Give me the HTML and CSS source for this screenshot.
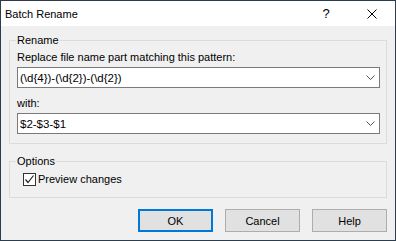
FILE: index.html
```html
<!DOCTYPE html>
<html lang="en">
<head>
    <meta charset="UTF-8">
    <title>Batch Rename</title>
    <link rel="stylesheet" href="styles.css">
</head>
<body>
    <div class="window">
        <!-- Заголовок окна -->
        <div class="titlebar">
            <div class="title">Batch Rename</div>
            <div class="caption-btn help-btn">?</div>
            <div class="caption-btn close-btn">
                <svg width="10" height="10" viewBox="0 0 10 10">
                    <path d="M0.5 0.5 L9.5 9.5 M9.5 0.5 L0.5 9.5" stroke="#000" stroke-width="1" fill="none"/>
                </svg>
            </div>
        </div>

        <div class="content">
            <fieldset class="group group-rename">
                <legend>Rename</legend>
                <div class="group-body">
                    <div class="field-label">Replace file name part matching this pattern:</div>
                    <div class="combo">
                        <span class="combo-text">(\d{4})-(\d{2})-(\d{2})</span>
                        <svg class="combo-arrow" width="9" height="5" viewBox="0 0 9 5">
                            <path d="M0.5 0.5 L4.5 4.5 L8.5 0.5" stroke="#555" stroke-width="1" fill="none"/>
                        </svg>
                    </div>
                    <div class="field-label with-label">with:</div>
                    <div class="combo">
                        <span class="combo-text">$2-$3-$1</span>
                        <svg class="combo-arrow" width="9" height="5" viewBox="0 0 9 5">
                            <path d="M0.5 0.5 L4.5 4.5 L8.5 0.5" stroke="#555" stroke-width="1" fill="none"/>
                        </svg>
                    </div>
                </div>
            </fieldset>

            <fieldset class="group group-options">
                <legend>Options</legend>
                <div class="group-body">
                    <label class="check">
                        <span class="check-box">
                            <svg width="11" height="11" viewBox="0 0 11 11">
                                <path d="M1.5 5.5 L4 8.5 L9.5 1.5" stroke="#222" stroke-width="1.2" fill="none"/>
                            </svg>
                        </span>
                        Preview changes
                    </label>
                </div>
            </fieldset>

            <div class="buttons">
                <button class="btn btn-default">OK</button>
                <button class="btn">Cancel</button>
                <button class="btn">Help</button>
            </div>
        </div>
    </div>
</body>
</html>
```

FILE: styles.css
```css
body {
    margin: 0;
    padding: 0;
    font-family: "Liberation Sans", Arial, sans-serif;
    font-size: 11px;
    color: #000;
    background-color: #f0f0f0;
}
.window {
    width: 396px;
    height: 241px;
    box-sizing: border-box;
    border: 1px solid #2b3e50;
    background-color: #f0f0f0;
}
.titlebar {
    height: 25px;
    background-color: #fff;
    display: flex;
    align-items: center;
}
.title {
    flex: 1;
    padding-left: 4px;
    line-height: 16px;
}
.caption-btn {
    width: 46px;
    height: 25px;
    display: flex;
    justify-content: center;
    align-items: center;
}
.help-btn {
    font-size: 13px;
    line-height: 16px;
}
.content {
    padding: 6px 8px 0 8px;
}
.group {
    margin: 0;
    padding: 0;
    border: 1px solid #dcdcdc;
    box-sizing: border-box;
}
.group legend {
    padding: 0 1px;
    margin-left: 6px;
    line-height: 16px;
}
.group-body {
    padding: 0 6px 0 7px;
}
.group-rename {
    height: 112px;
}
.field-label {
    line-height: 16px;
    margin-top: 1px;
}
.with-label {
    margin-top: 7px;
}
.combo {
    height: 21px;
    box-sizing: border-box;
    border: 1px solid #7a7a7a;
    background-color: #fff;
    margin-top: 2px;
    display: flex;
    align-items: center;
    padding: 0 4px 0 2px;
}
.combo-text {
    flex: 1;
    font-size: 11.5px;
}
.group-options {
    margin-top: 9px;
    height: 45px;
}
.check {
    display: flex;
    align-items: center;
    line-height: 13px;
    margin: 4px 0 0 6px;
}
.check-box {
    width: 13px;
    height: 13px;
    box-sizing: border-box;
    border: 1px solid #333;
    background-color: #fff;
    margin-right: 2px;
    display: flex;
    justify-content: center;
    align-items: center;
}
.buttons {
    display: flex;
    justify-content: flex-end;
    gap: 12px;
    margin-top: 11px;
}
.btn {
    width: 75px;
    height: 23px;
    box-sizing: border-box;
    border: 1px solid #adadad;
    background-color: #e1e1e1;
    font-family: "Liberation Sans", Arial, sans-serif;
    font-size: 11px;
    color: #000;
    padding: 0;
}
.btn-default {
    border: 2px solid #0078d7;
}
```
